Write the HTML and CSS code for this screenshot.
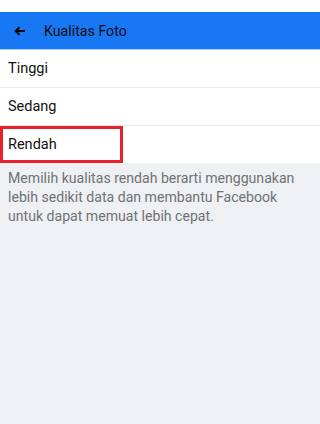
FILE: index.html
```html
<!DOCTYPE html>
<html>
<head>
<meta charset="utf-8">
<link rel="stylesheet" href="styles.css">
</head>
<body>
<div class="screen">
  <div class="topgap"></div>
  <header class="appbar">
    <svg class="back" width="12" height="10" viewBox="0 0 12 10"><path d="M11 5H2.5M5.5 1.2L1.6 5l3.9 3.8" fill="none" stroke="#0a0a0a" stroke-width="2"/></svg>
    <span class="title">Kualitas Foto</span>
  </header>
  <ul class="options">
    <li class="option">Tinggi</li>
    <li class="option">Sedang</li>
    <li class="option selected"><span class="label">Rendah</span></li>
  </ul>
  <p class="note">Memilih kualitas rendah berarti menggunakan lebih sedikit data dan membantu Facebook untuk dapat memuat lebih cepat.</p>
</div>
</body>
</html>
```
FILE: styles.css
```css
html, body {
  margin: 0;
  padding: 0;
}
body {
  min-height: 424px;
  background: #eef0f3;
  font-family: Roboto, "Liberation Sans", sans-serif;
  overflow: hidden;
}
.screen {
  display: flex;
  flex-direction: column;
}
.topgap {
  height: 12px;
  background: #ffffff;
}
.appbar {
  height: 37px;
  background: #1877f2;
  display: flex;
  align-items: center;
  padding-left: 14px;
  border-bottom: 1px solid #a9c8f2;
}
.back {
  display: block;
  margin-right: 18px;
}
.title {
  font-size: 14.2px;
  color: #0b0d12;
}
.options {
  list-style: none;
  margin: 0;
  padding: 0;
  background: #ffffff;
}
.option {
  height: 37px;
  display: flex;
  align-items: center;
  padding-left: 8px;
  font-size: 14.5px;
  color: #111111;
  border-bottom: 1px solid #e9eaec;
}
.option:last-child {
  border-bottom: none;
}
.option.selected {
  position: relative;
}
.option.selected::after {
  content: "";
  position: absolute;
  left: 0;
  top: 0;
  width: 123px;
  height: 37px;
  box-sizing: border-box;
  border: 3px solid #e8202a;
}
.note {
  margin: 0;
  padding: 6px 0 0 8px;
  max-width: 292px;
  font-size: 14.1px;
  line-height: 19px;
  color: #707276;
}
```
